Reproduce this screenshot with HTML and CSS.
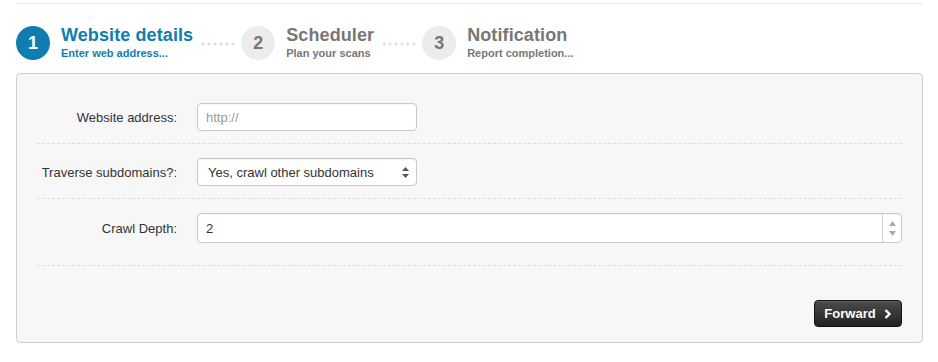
FILE: index.html
```html
<!DOCTYPE html>
<html>
<head>
<meta charset="utf-8">
<link rel="stylesheet" href="styles.css">
</head>
<body>
<div class="page">
  <div class="rule"></div>
  <div class="steps">
    <div class="step active">
      <div class="num">1</div>
      <div class="stext">
        <div class="stitle">Website details</div>
        <div class="ssub">Enter web address...</div>
      </div>
    </div>
    <div class="dots"></div>
    <div class="step">
      <div class="num">2</div>
      <div class="stext">
        <div class="stitle">Scheduler</div>
        <div class="ssub">Plan your scans</div>
      </div>
    </div>
    <div class="dots"></div>
    <div class="step">
      <div class="num">3</div>
      <div class="stext">
        <div class="stitle">Notification</div>
        <div class="ssub">Report completion...</div>
      </div>
    </div>
  </div>
  <div class="panel">
    <div class="row first">
      <label class="lbl">Website address:</label>
      <div class="field short"><span class="ph">http://</span></div>
    </div>
    <div class="row">
      <label class="lbl">Traverse subdomains?:</label>
      <div class="field short select">
        <span>Yes, crawl other subdomains</span>
        <svg class="sarrows" width="7" height="11" viewBox="0 0 7 11"><path d="M3.5 0 L7 4 L0 4 Z M0 7 L7 7 L3.5 11 Z" fill="#555"/></svg>
      </div>
    </div>
    <div class="row last">
      <label class="lbl">Crawl Depth:</label>
      <div class="field wide number">
        <span class="val">2</span>
        <div class="spin">
          <svg width="7" height="5" viewBox="0 0 7 5"><path d="M3.5 0 L7 5 L0 5 Z" fill="#aaa"/></svg>
          <svg width="7" height="5" viewBox="0 0 7 5"><path d="M0 0 L7 0 L3.5 5 Z" fill="#aaa"/></svg>
        </div>
      </div>
    </div>
    <div class="actions">
      <button class="btn">Forward <svg width="8" height="10" viewBox="0 0 8 10"><path d="M1.5 1 L5.5 5 L1.5 9" fill="none" stroke="#fff" stroke-width="2.4"/></svg></button>
    </div>
  </div>
</div>
</body>
</html>
```

FILE: styles.css
```css
* { box-sizing: border-box; }
body {
  margin: 0;
  background: #fff;
  font-family: "Liberation Sans", Arial, sans-serif;
  color: #333;
}
.page {
  margin-left: 16px;
  width: 907px;
  padding-top: 3px;
}
.rule {
  border-top: 1px solid #e6e6e6;
}
.steps {
  display: flex;
  align-items: center;
  margin-top: 22px;
  height: 34px;
}
.step {
  display: flex;
  align-items: center;
}
.num {
  width: 34px;
  height: 34px;
  border-radius: 50%;
  background: #ececec;
  color: #777;
  font-weight: bold;
  font-size: 18px;
  display: flex;
  align-items: center;
  justify-content: center;
}
.step.active .num {
  background: #0f7db0;
  color: #fff;
}
.stext {
  margin-left: 11px;
  margin-top: -1px;
}
.stitle {
  font-size: 18px;
  font-weight: bold;
  line-height: 20px;
  color: #777;
  letter-spacing: 0.1px;
}
.ssub {
  font-size: 11px;
  font-weight: bold;
  line-height: 14px;
  color: #777;
  margin-top: 1px;
}
.step.active .stitle,
.step.active .ssub {
  color: #0f7db0;
}
.dots {
  width: 34px;
  height: 4px;
  margin: 2px 7px 0 7px;
  background-image: radial-gradient(circle, #dedede 1.3px, transparent 1.7px);
  background-size: 6px 4px;
  background-repeat: repeat-x;
}
.panel {
  margin-top: 13px;
  height: 270px;
  border: 1px solid #cfcfcf;
  border-radius: 4px;
  background: #f7f7f7;
  padding: 15px 20px 0 20px;
}
.row {
  display: flex;
  align-items: center;
  padding: 14px 0 12px 0;
  border-bottom: 1px dashed #dcdcdc;
}
.row.last {
  padding-bottom: 22px;
}
.lbl {
  width: 140px;
  text-align: right;
  font-size: 13px;
  color: #333;
  margin-right: 20px;
}
.field {
  height: 28px;
  background: #fff;
  border: 1px solid #c8c8c8;
  border-radius: 4px;
  font-size: 13px;
  display: flex;
  align-items: center;
  padding-left: 8px;
  box-shadow: inset 0 1px 1px rgba(0,0,0,0.04);
}
.field.short { width: 220px; }
.field.wide { flex: 1; height: 30px; }
.ph { color: #999; }
.select {
  justify-content: space-between;
  padding-left: 10px;
  padding-right: 7px;
  color: #333;
}
.number { padding-right: 0; }
.val { flex: 1; color: #333; }
.spin {
  width: 19px;
  height: 100%;
  border-left: 1px solid #d0d0d0;
  display: flex;
  flex-direction: column;
  align-items: center;
  justify-content: center;
  gap: 5px;
}
.actions {
  display: flex;
  justify-content: flex-end;
  padding-top: 34px;
}
.btn {
  width: 88px;
  height: 27px;
  border: 1px solid #111;
  border-radius: 4px;
  background: linear-gradient(#4b4b4b, #222);
  color: #fff;
  font-family: "Liberation Sans", Arial, sans-serif;
  font-size: 13px;
  font-weight: bold;
  display: flex;
  align-items: center;
  justify-content: center;
  gap: 8px;
  padding: 0;
  box-shadow: inset 0 1px 0 rgba(255,255,255,0.12);
}
```
